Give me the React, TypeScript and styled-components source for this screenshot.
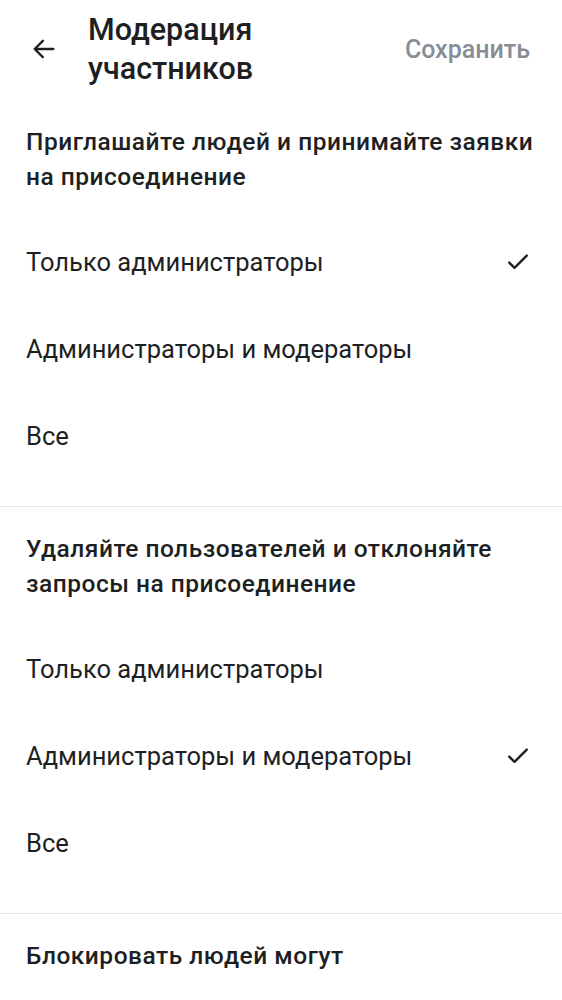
import React from "react";
import styled, { createGlobalStyle } from "styled-components";

const GlobalStyle = createGlobalStyle`
  body {
    margin: 0;
    background: #ffffff;
    font-family: Roboto, "Noto Sans", sans-serif;
    color: #1e1f23;
  }
`;

type Section = {
  title: string;
  options: string[];
  selected: number;
};

const sections: Section[] = [
  {
    title: "Приглашайте людей и принимайте заявки на присоединение",
    options: ["Только администраторы", "Администраторы и модераторы", "Все"],
    selected: 0,
  },
  {
    title: "Удаляйте пользователей и отклоняйте запросы на присоединение",
    options: ["Только администраторы", "Администраторы и модераторы", "Все"],
    selected: 1,
  },
  {
    title: "Блокировать людей могут",
    options: [],
    selected: -1,
  },
];

const BackIcon = () => (
  <svg width="28" height="28" viewBox="0 0 24 24" fill="none">
    <path
      d="M20 12H4.5M11 5l-7 7 7 7"
      stroke="#1e1f23"
      strokeWidth="2"
      strokeLinecap="round"
      strokeLinejoin="round"
    />
  </svg>
);

const CheckIcon = () => (
  <svg width="28" height="28" viewBox="0 0 24 24" fill="none">
    <path
      d="M4.5 12.5l4.5 4.5L19.5 6.5"
      stroke="#1e1f23"
      strokeWidth="2"
      strokeLinecap="round"
      strokeLinejoin="round"
    />
  </svg>
);

const App: React.FC = () => {
  return (
    <Page>
      <GlobalStyle />
      <TopBar>
        <BackButton aria-label="Назад">
          <BackIcon />
        </BackButton>
        <Title>
          Модерация
          <br />
          участников
        </Title>
        <SaveButton>Сохранить</SaveButton>
      </TopBar>
      {sections.map((section, i) => (
        <SectionBlock key={i} $divider={i > 0}>
          <SectionTitle>{section.title}</SectionTitle>
          {section.options.length > 0 && (
            <OptionList>
              {section.options.map((opt, j) => (
                <OptionRow key={j}>
                  <span>{opt}</span>
                  {j === section.selected && <CheckIcon />}
                </OptionRow>
              ))}
            </OptionList>
          )}
        </SectionBlock>
      ))}
    </Page>
  );
};

export default App;

const Page = styled.div`
  width: 562px;
  min-height: 1000px;
  background: #ffffff;
  overflow: hidden;
`;

const TopBar = styled.header`
  display: flex;
  align-items: center;
  height: 98px;
  padding: 0 32px 0 28px;
  box-sizing: border-box;
`;

const BackButton = styled.button`
  display: flex;
  align-items: center;
  justify-content: center;
  width: 32px;
  height: 32px;
  padding: 0;
  border: none;
  background: none;
  margin-right: 28px;
`;

const Title = styled.h1`
  flex: 1;
  margin: 0;
  font-size: 30.5px;
  line-height: 39px;
  font-weight: 500;
  color: #1e1f23;
`;

const SaveButton = styled.button`
  border: none;
  background: none;
  padding: 0;
  font-family: inherit;
  font-size: 25px;
  font-weight: 500;
  color: #878d96;
`;

const SectionBlock = styled.section<{ $divider: boolean }>`
  padding: ${(p) => (p.$divider ? "24px" : "26px")} 0 27px;
  border-top: ${(p) => (p.$divider ? "1px solid #e7e9ec" : "none")};
`;

const SectionTitle = styled.h2`
  margin: 0;
  padding: 0 20px 0 26px;
  font-size: 24.5px;
  line-height: 35px;
  letter-spacing: 0.5px;
  font-weight: 500;
  color: #1e1f23;
`;

const OptionList = styled.div`
  margin-top: 24px;
  display: flex;
  flex-direction: column;
`;

const OptionRow = styled.div`
  display: flex;
  align-items: center;
  justify-content: space-between;
  height: 87px;
  padding: 0 30px 0 26px;
  font-size: 25.5px;
  font-weight: 400;
  color: #1e1f23;
`;
